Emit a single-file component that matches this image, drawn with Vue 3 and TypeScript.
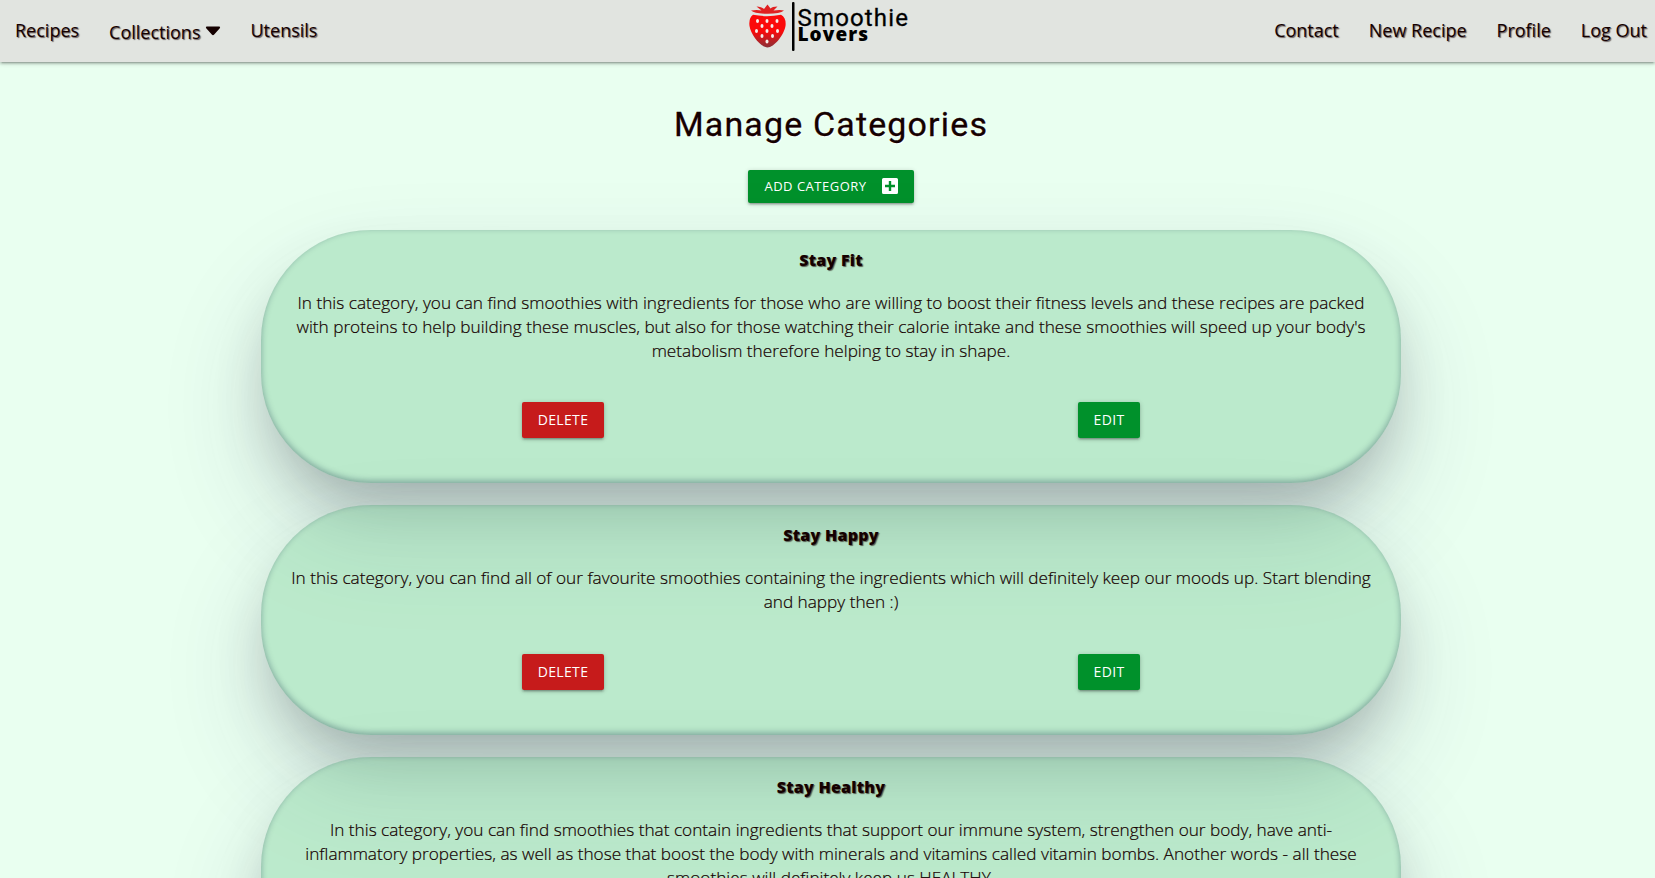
<script setup lang="ts">
interface Category {
  name: string
  text: string
}

const leftLinks: string[] = ['Recipes', 'Collections', 'Utensils']
const rightLinks: string[] = ['Contact', 'New Recipe', 'Profile', 'Log Out']

const categories: Category[] = [
  {
    name: 'Stay Fit',
    text: "In this category, you can find smoothies with ingredients for those who are willing to boost their fitness levels and these recipes are packed with proteins to help building these muscles, but also for those watching their calorie intake and these smoothies will speed up your body's metabolism therefore helping to stay in shape.",
  },
  {
    name: 'Stay Happy',
    text: 'In this category, you can find all of our favourite smoothies containing the ingredients which will definitely keep our moods up. Start blending and happy then :)',
  },
  {
    name: 'Stay Healthy',
    text: 'In this category, you can find smoothies that contain ingredients that support our immune system, strengthen our body, have anti-inflammatory properties, as well as those that boost the body with minerals and vitamins called vitamin bombs. Another words - all these smoothies will definitely keep us HEALTHY.',
  },
]

const seeds: [number, number][] = [
  [8.5, 21], [18, 21], [28, 21],
  [13, 26], [23, 26],
  [7.5, 31], [18, 31], [28.5, 31],
  [13, 36], [23.5, 36], [18, 41.5],
]
</script>

<template>
  <div class="page">
    <nav class="nav">
      <ul class="links">
        <li v-for="link in leftLinks" :key="link" :class="{ dropdown: link === 'Collections' }">
          <a>{{ link }}<svg v-if="link === 'Collections'" class="caret" viewBox="0 0 16 10"><path d="M1.8 0.5h12.4q1.6 0.3 0.6 1.7L9.2 8.6q-1.2 1.1-2.4 0L1.2 2.2q-1-1.4 0.6-1.7z" /></svg></a>
        </li>
      </ul>
      <svg class="logo" viewBox="0 0 164 56">
        <defs>
          <linearGradient id="berry" x1="0" y1="0" x2="0" y2="1">
            <stop offset="0.5" stop-color="#fb0a0a" />
            <stop offset="1" stop-color="#8a3038" />
          </linearGradient>
        </defs>
        <path class="leaf" d="M2 10.5Q8 9.5 12.5 10.5L7.5 6.5Q12.5 6.5 15 9L18.5 4.5L21.5 8.5Q23 6.5 28.5 6.5L24.5 10.5Q31 9.5 35 10.5Q31 13.8 18.5 13.8Q6 13.8 2 10.5z" />
        <path class="body" d="M4 14.8Q18 17.5 32 14.8Q37.5 18 36.5 26C35 35 25 47.5 18.5 47.5C12 47.5 2 35 0.5 26Q-0.5 18 4 14.8z" />
        <ellipse v-for="(s, i) in seeds" :key="i" class="seed" :cx="s[0]" :cy="s[1]" rx="1.5" ry="2" />
        <rect x="43" y="2" width="2.5" height="49" rx="1" />
        <text class="smoothie" x="48.5" y="25.5" textLength="110.5">Smoothie</text>
        <text class="lovers" x="48.5" y="41" textLength="70.5">Lovers</text>
      </svg>
      <ul class="links">
        <li v-for="link in rightLinks" :key="link"><a>{{ link }}</a></li>
      </ul>
    </nav>
    <main class="content">
      <h1>Manage Categories</h1>
      <button class="btn add">
        Add Category
        <svg class="plus" viewBox="0 0 16 16"><path fill-rule="evenodd" d="M1.5 0h13q1.5 0 1.5 1.5v13q0 1.5-1.5 1.5h-13q-1.5 0-1.5-1.5v-13Q0 0 1.5 0zM6.8 3v3.8H3v2.4h3.8V13h2.4V9.200H13V6.800H9.200V3z" /></svg>
      </button>
      <section v-for="c in categories" :key="c.name" class="card">
        <h2>{{ c.name }}</h2>
        <p>{{ c.text }}</p>
        <div class="actions">
          <div><button class="btn delete">Delete</button></div>
          <div><button class="btn">Edit</button></div>
        </div>
      </section>
    </main>
  </div>
</template>

<style>
body {
  margin: 0;
  overflow: hidden;
  background: #e9fff0;
}
</style>

<style scoped>
.page {
  height: 878px;
  overflow: hidden;
  background: #e9fff0;
  color: #150000;
  font-family: 'Open Sans', sans-serif;
}
.nav {
  display: grid;
  grid-template-columns: 1fr 164px 1fr;
  height: 62px;
  background: #e1e4e0;
  box-shadow: 0 2px 2px 0 rgba(0, 0, 0, 0.14), 0 3px 1px -2px rgba(0, 0, 0, 0.12), 0 1px 5px 0 rgba(0, 0, 0, 0.2);
}
.links {
  display: flex;
  margin: 0;
  padding: 0;
  list-style: none;
}
.links:last-child {
  justify-content: flex-end;
  padding-right: 8px;
  gap: 30px;
}
.links:first-child {
  padding-left: 15px;
  gap: 30px;
}
.links a {
  font-size: 18px;
  line-height: 61px;
  text-shadow: 1px 1px 1px rgba(21, 0, 0, 0.6);
}
.links .dropdown {
  padding-top: 2px;
}
.caret {
  width: 16px;
  height: 10px;
  margin-left: 5px;
  margin-right: -1px;
  vertical-align: 3px;
  fill: #150000;
}
.logo {
  width: 164px;
  height: 56px;
  margin-left: 3px;
}
.leaf {
  fill: #e02020;
}
.body {
  fill: url(#berry);
}
.seed {
  fill: #f4eeea;
}
.smoothie {
  font: 400 24px Roboto, sans-serif;
  stroke: #000;
  stroke-width: 0.3px;
}
.lovers {
  font: 800 19px 'Open Sans', sans-serif;
}
.content {
  display: flex;
  flex-direction: column;
  align-items: center;
  padding-left: 7px;
}
h1 {
  margin: 41px 0 24px;
  font: 400 34px/43px Roboto, sans-serif;
  letter-spacing: 1.15px;
  text-shadow: 1px 1px 1px #fff;
  -webkit-text-stroke: 0.3px #150000;
}
.btn {
  height: 36px;
  padding: 0 16px;
  border: 0;
  border-radius: 2px;
  background: #00912b;
  color: #fff;
  font: 400 14px/36px 'Open Sans', sans-serif;
  letter-spacing: 0.35px;
  text-transform: uppercase;
  box-shadow: 0 2px 2px 0 rgba(0, 0, 0, 0.14), 0 3px 1px -2px rgba(0, 0, 0, 0.12), 0 1px 5px 0 rgba(0, 0, 0, 0.2);
}
.add {
  display: flex;
  align-items: center;
  gap: 15px;
  height: 33px;
  margin-bottom: 27px;
  padding-bottom: 1px;
  font-size: 13px;
  line-height: 32px;
  letter-spacing: 0.5px;
}
.plus {
  width: 16px;
  height: 16px;
  fill: #fff;
}
.delete {
  background: #c61b1b;
}
.card {
  box-sizing: border-box;
  width: 1140px;
  margin-bottom: 22px;
  padding: 19px 24px 44.9px;
  border-radius: 110px;
  background: rgba(113, 201, 144, 0.38);
  text-align: center;
  box-shadow: rgba(50, 50, 93, 0.17) 0 50px 100px 0, rgba(0, 0, 0, 0.26) 0 30px 60px -18px, rgba(10, 37, 64, 0.35) 0 -2px 6px 0 inset;
}
h2 {
  margin: 0 0 20px;
  font-size: 16px;
  font-weight: 800;
  letter-spacing: 0.25px;
  line-height: 22px;
  text-shadow: 1px 1px 1px rgba(21, 0, 0, 0.6);
}
p {
  margin: 0 0 39.4px;
  font-size: 17.2px;
  font-weight: 300;
  line-height: 24px;
  -webkit-text-stroke: 0.2px #150000;
}
.actions {
  display: grid;
  grid-template-columns: 556px 1fr;
}
</style>
